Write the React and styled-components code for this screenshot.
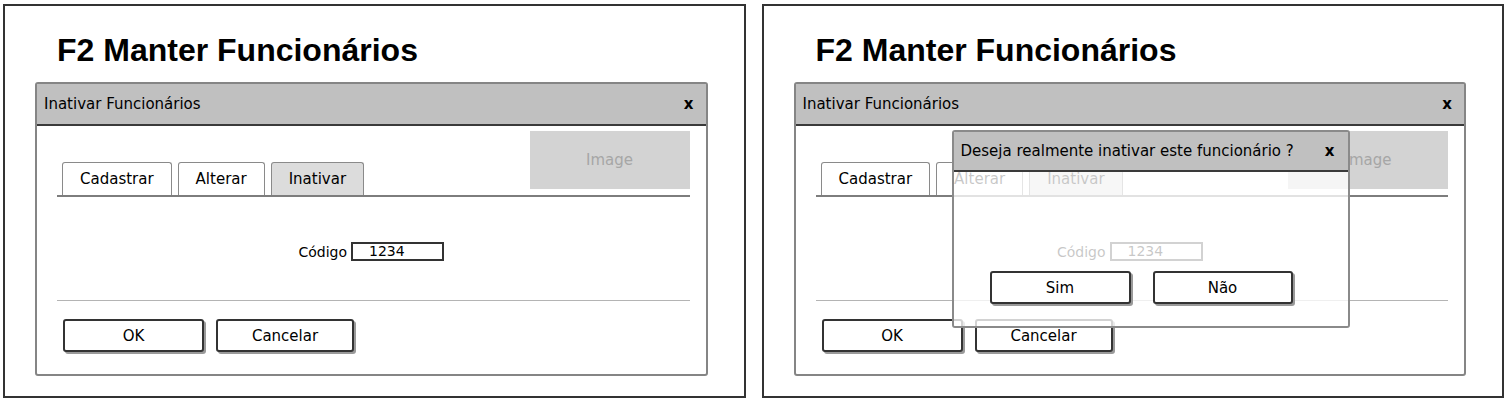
import React from 'react';
import styled, { createGlobalStyle } from 'styled-components';

const Global = createGlobalStyle`
  html, body { margin: 0; padding: 0; background: #fff; }
  body { font-family: "DejaVu Sans", "Liberation Sans", sans-serif; color: #000; }
`;

const Page = styled.div`
  display: flex;
  gap: 16px;
  width: 1508px;
  height: 402px;
  box-sizing: border-box;
  padding: 4px 4px 0 3px;
`;

const Frame = styled.section`
  flex: 1;
  height: 394px;
  box-sizing: border-box;
  border: 2px solid #333;
  padding: 24px 36px 0 30px;
`;

const Heading = styled.h1`
  margin: 0 0 12px 22px;
  font-family: "Liberation Sans", Arial, sans-serif;
  font-weight: 700;
  font-size: 32px;
  line-height: 40px;
`;

const Dialog = styled.div`
  position: relative;
  border: 2px solid #858585;
  border-radius: 3px;
  background: #fff;
`;

const TitleBar = styled.div`
  display: flex;
  align-items: center;
  justify-content: space-between;
  height: ${p => p.$h || 40}px;
  padding: 0 ${p => p.$pr || 12}px 0 7px;
  background: #c0c0c0;
  border-bottom: 2px solid #3a3a3a;
  font-size: 15px;
`;

const Close = styled.span`
  font-weight: 700;
  font-size: 15px;
`;

const Body = styled.div`
  padding: 5px 16px 22px 20px;
`;

const TabHeader = styled.div`
  display: flex;
  align-items: flex-end;
  justify-content: space-between;
  height: 64px;
  padding-left: 5px;
  border-bottom: 2px solid #7d7d7d;
`;

const Tabs = styled.div`
  display: flex;
  gap: 6px;
`;

const Tab = styled.div`
  display: flex;
  align-items: center;
  height: 33px;
  box-sizing: border-box;
  padding: 0 17px;
  border: 1px solid #8a8a8a;
  border-bottom: none;
  border-radius: 3px 3px 0 0;
  background: ${p => (p.$active ? '#dcdcdc' : '#fff')};
  font-size: 15px;
`;

const ImageBox = styled.div`
  display: flex;
  align-items: center;
  justify-content: center;
  width: 160px;
  height: 58px;
  margin-bottom: 6px;
  background: #d3d3d3;
  color: #a6a6a6;
  font-size: 15px;
`;

const FieldRow = styled.div`
  display: flex;
  justify-content: center;
  align-items: center;
  gap: 4px;
  margin-top: 45px;
  padding-right: 4px;
`;

const Label = styled.span`
  font-size: 14px;
`;

const Input = styled.div`
  width: 93px;
  height: 19px;
  box-sizing: border-box;
  border: 2px solid #333;
  padding-left: 16px;
  font-size: 14px;
  line-height: 15px;
`;

const Divider = styled.hr`
  margin: 39px 0 0;
  border: none;
  height: 1px;
  background: #b4b4b4;
`;

const ButtonRow = styled.div`
  display: flex;
  gap: 12px;
  margin-top: 18px;
  padding-left: 6px;
`;

const Button = styled.button`
  width: ${p => p.$w}px;
  height: 33px;
  box-sizing: border-box;
  border: 2px solid #333;
  border-radius: 3px;
  background: #fff;
  box-shadow: 2px 2px 0 #9a9a9a;
  font-family: "DejaVu Sans", sans-serif;
  font-size: 15px;
  color: #000;
  padding: 0;
`;

const Modal = styled.div`
  position: absolute;
  left: 156px;
  top: 46px;
  width: 398px;
  height: 198px;
  box-sizing: border-box;
  border: 2px solid #8a8a8a;
  border-radius: 3px;
  display: flex;
  flex-direction: column;
  overflow: hidden;
`;

const ModalBody = styled.div`
  flex: 1;
  display: flex;
  align-items: flex-end;
  gap: 22px;
  padding: 0 0 22px 36px;
  background: rgba(255, 255, 255, 0.78);
`;

function Screen({ confirm }) {
  return (
    <Frame>
      <Heading>F2 Manter Funcionários</Heading>
      <Dialog>
        <TitleBar>
          <span>Inativar Funcionários</span>
          <Close>x</Close>
        </TitleBar>
        <Body>
          <TabHeader>
            <Tabs>
              <Tab>Cadastrar</Tab>
              <Tab>Alterar</Tab>
              <Tab $active>Inativar</Tab>
            </Tabs>
            <ImageBox>Image</ImageBox>
          </TabHeader>
          <FieldRow>
            <Label>Código</Label>
            <Input>1234</Input>
          </FieldRow>
          <Divider />
          <ButtonRow>
            <Button $w={141}>OK</Button>
            <Button $w={138}>Cancelar</Button>
          </ButtonRow>
        </Body>
        {confirm && (
          <Modal>
            <TitleBar $h={38} $pr={13}>
              <span>Deseja realmente inativar este funcionário ?</span>
              <Close>x</Close>
            </TitleBar>
            <ModalBody>
              <Button $w={141}>Sim</Button>
              <Button $w={140}>Não</Button>
            </ModalBody>
          </Modal>
        )}
      </Dialog>
    </Frame>
  );
}

export default function App() {
  return (
    <>
      <Global />
      <Page>
        <Screen />
        <Screen confirm />
      </Page>
    </>
  );
}
